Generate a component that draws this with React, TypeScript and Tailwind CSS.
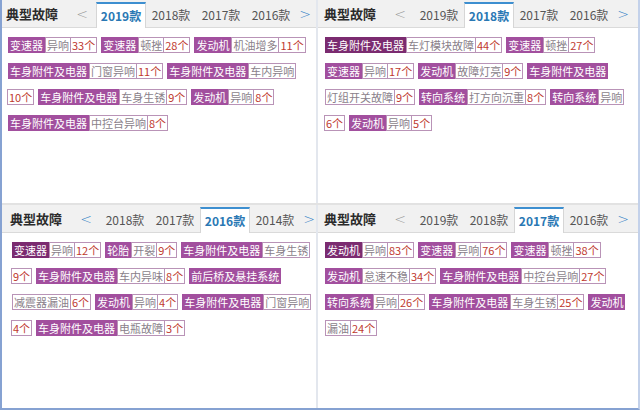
import React from 'react';

type Fault = { part: string; issue: string; count: string };

interface PanelProps {
  years: string[];
  active: string;
  prevActive?: boolean;
  faults: Fault[];
  darkFirst?: boolean;
  padLeft: string;
  tagLeft: string;
}

const cjk = { fontFamily: '"Noto Sans CJK SC", "Microsoft YaHei", sans-serif' };

const FaultTag: React.FC<{ fault: Fault; dark?: boolean }> = ({ fault, dark }) => (
  <>
    <span
      className={`h-4 px-[1px] border text-[11px] leading-[14px] text-white whitespace-nowrap ${
        dark ? 'bg-[#7b2b70] border-[#7b2b70]' : 'bg-[#a24f9e] border-[#a24f9e]'
      }`}
    >
      {fault.part}
    </span>
    <span className="h-4 px-[1px] border border-[#b993b7] bg-white text-[11px] leading-[14px] text-[#8a7f8a] whitespace-nowrap">
      {fault.issue}
    </span>
    <span className="h-4 px-[1px] -ml-px mr-[4px] border border-[#b993b7] bg-white text-[11px] leading-[14px] text-[#c0392f] whitespace-nowrap">
      {fault.count}
    </span>
  </>
);

const Panel: React.FC<PanelProps> = ({ years, active, prevActive, faults, darkFirst, padLeft, tagLeft }) => (
  <div className="flex flex-col h-full bg-white">
    {/* Header: title + year tabs */}
    <div className={`flex items-stretch h-[28px] bg-[#f1f1f1] border-b border-[#dadada] ${padLeft}`}>
      <span className="self-center shrink-0 whitespace-nowrap text-[13px] font-bold text-[#2b2b2b] leading-none">
        典型故障
      </span>
      <span
        className={`self-center shrink-0 w-[16px] ml-[16px] text-center text-[14px] leading-none ${
          prevActive ? 'text-[#3a86c8]' : 'text-[#9a9a9a]'
        }`}
        style={{ fontFamily: '"DejaVu Sans", sans-serif', fontWeight: 200 }}
      >
        &lt;
      </span>
      <div className="flex items-end shrink-0 ml-[6px]">
        {years.map((y) =>
          y === active ? (
            <div
              key={y}
              className="w-[50px] h-[26px] -mb-px flex items-center justify-center bg-white border-t-2 border-x border-t-[#3d8fd0] border-x-[#d6d6d6] text-[12px] font-bold text-[#2a78b4]"
            >
              {y}
            </div>
          ) : (
            <div key={y} className="w-[50px] h-[25px] flex items-center justify-center text-[12px] text-[#555]">
              {y}
            </div>
          )
        )}
      </div>
      <span
        className="self-center shrink-0 w-[16px] ml-[1px] text-center text-[14px] leading-none text-[#3a86c8]"
        style={{ fontFamily: '"DejaVu Sans", sans-serif', fontWeight: 200 }}
      >
        &gt;
      </span>
    </div>

    {/* Fault tags */}
    <div className={`flex flex-wrap gap-y-[10px] mt-[9px] w-[302px] ${tagLeft}`}>
      {faults.map((f, i) => (
        <FaultTag key={i} fault={f} dark={darkFirst && i === 0} />
      ))}
    </div>
  </div>
);

const panels: PanelProps[] = [
  {
    years: ['2019款', '2018款', '2017款', '2016款'],
    active: '2019款',
    padLeft: 'pl-[4px]',
    tagLeft: 'ml-[6px]',
    faults: [
      { part: '变速器', issue: '异响', count: '33个' },
      { part: '变速器', issue: '顿挫', count: '28个' },
      { part: '发动机', issue: '机油增多', count: '11个' },
      { part: '车身附件及电器', issue: '门窗异响', count: '11个' },
      { part: '车身附件及电器', issue: '车内异响', count: '10个' },
      { part: '车身附件及电器', issue: '车身生锈', count: '9个' },
      { part: '发动机', issue: '异响', count: '8个' },
      { part: '车身附件及电器', issue: '中控台异响', count: '8个' },
    ],
  },
  {
    years: ['2019款', '2018款', '2017款', '2016款'],
    active: '2018款',
    darkFirst: true,
    padLeft: 'pl-[6px]',
    tagLeft: 'ml-[7px]',
    faults: [
      { part: '车身附件及电器', issue: '车灯模块故障', count: '44个' },
      { part: '变速器', issue: '顿挫', count: '27个' },
      { part: '变速器', issue: '异响', count: '17个' },
      { part: '发动机', issue: '故障灯亮', count: '9个' },
      { part: '车身附件及电器', issue: '灯组开关故障', count: '9个' },
      { part: '转向系统', issue: '打方向沉重', count: '8个' },
      { part: '转向系统', issue: '异响', count: '6个' },
      { part: '发动机', issue: '异响', count: '5个' },
    ],
  },
  {
    years: ['2018款', '2017款', '2016款', '2014款'],
    active: '2016款',
    prevActive: true,
    darkFirst: true,
    padLeft: 'pl-[8px]',
    tagLeft: 'ml-[10px]',
    faults: [
      { part: '变速器', issue: '异响', count: '12个' },
      { part: '轮胎', issue: '开裂', count: '9个' },
      { part: '车身附件及电器', issue: '车身生锈', count: '9个' },
      { part: '车身附件及电器', issue: '车内异味', count: '8个' },
      { part: '前后桥及悬挂系统', issue: '减震器漏油', count: '6个' },
      { part: '发动机', issue: '异响', count: '4个' },
      { part: '车身附件及电器', issue: '门窗异响', count: '4个' },
      { part: '车身附件及电器', issue: '电瓶故障', count: '3个' },
    ],
  },
  {
    years: ['2019款', '2018款', '2017款', '2016款'],
    active: '2017款',
    darkFirst: true,
    padLeft: 'pl-[6px]',
    tagLeft: 'ml-[7px]',
    faults: [
      { part: '发动机', issue: '异响', count: '83个' },
      { part: '变速器', issue: '异响', count: '76个' },
      { part: '变速器', issue: '顿挫', count: '38个' },
      { part: '发动机', issue: '怠速不稳', count: '34个' },
      { part: '车身附件及电器', issue: '中控台异响', count: '27个' },
      { part: '转向系统', issue: '异响', count: '26个' },
      { part: '车身附件及电器', issue: '车身生锈', count: '25个' },
      { part: '发动机', issue: '漏油', count: '24个' },
    ],
  },
];

export default function App() {
  return (
    <div
      className="w-[640px] h-[410px] flex flex-col bg-white border-l-2 border-b-2 border-r-2 border-l-[#86a2d2] border-b-[#86a2d2] border-r-[#c3d1ea] overflow-hidden"
      style={cjk}
    >
      <div className="flex h-[205px] border-b-2 border-[#e2e2e2]">
        <div className="w-[316px] border-r-2 border-[#e3e7ee]">
          <Panel {...panels[0]} />
        </div>
        <div className="flex-1">
          <Panel {...panels[1]} />
        </div>
      </div>
      <div className="flex flex-1">
        <div className="w-[316px] border-r-2 border-[#e3e7ee]">
          <Panel {...panels[2]} />
        </div>
        <div className="flex-1">
          <Panel {...panels[3]} />
        </div>
      </div>
    </div>
  );
}
